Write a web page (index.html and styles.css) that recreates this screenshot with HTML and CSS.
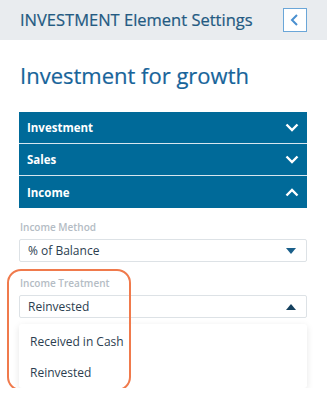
FILE: index.html
```html
<!DOCTYPE html>
<html lang="en">
<head>
  <meta charset="UTF-8" />
  <meta name="viewport" content="width=device-width, initial-scale=1" />
  <title>INVESTMENT Element Settings</title>
  <link rel="stylesheet" href="styles.css">
</head>
<body>
  <div class="header">
    <span class="header-title">INVESTMENT Element Settings</span>
    <button class="back-btn" aria-label="Back">
      <svg width="12" height="14" viewBox="0 0 12 14"><path d="M8 2 L3 7 L8 12" fill="none" stroke="#4a90d0" stroke-width="2" /></svg>
    </button>
  </div>

  <div class="content">
    <h1>Investment for growth</h1>

    <div class="accordion">
      <div class="acc-row">
        <span>Investment</span>
        <svg width="14" height="9" viewBox="0 0 14 9"><path d="M1.5 1.5 L7 7 L12.5 1.5" fill="none" stroke="#fff" stroke-width="2.4" /></svg>
      </div>
      <div class="acc-row">
        <span>Sales</span>
        <svg width="14" height="9" viewBox="0 0 14 9"><path d="M1.5 1.5 L7 7 L12.5 1.5" fill="none" stroke="#fff" stroke-width="2.4" /></svg>
      </div>
      <div class="acc-row">
        <span>Income</span>
        <svg width="14" height="9" viewBox="0 0 14 9"><path d="M1.5 7.5 L7 2 L12.5 7.5" fill="none" stroke="#fff" stroke-width="2.4" /></svg>
      </div>
    </div>

    <div class="field">
      <label>Income Method</label>
      <div class="select">
        <span>% of Balance</span>
        <span class="caret down"></span>
      </div>
    </div>

    <div class="field treatment">
      <label>Income Treatment</label>
      <div class="select">
        <span>Reinvested</span>
        <span class="caret up"></span>
      </div>
      <div class="dropdown">
        <div class="option">Received in Cash</div>
        <div class="option">Reinvested</div>
      </div>
      <div class="highlight"></div>
    </div>
  </div>
</body>
</html>
```

FILE: styles.css
```css
body {
  margin: 0;
  padding: 0;
  font-family: "Open Sans", "Noto Sans", sans-serif;
  background: #fff;
  color: #2c3e50;
}
.header {
  height: 40px;
  background-color: #e9ecef;
  display: flex;
  align-items: center;
  justify-content: space-between;
  padding: 0 20px 0 20px;
  box-sizing: border-box;
}
.header-title {
  font-size: 16.5px;
  color: #235a82;
  margin-top: -2px;
  -webkit-text-stroke: 0.2px #235a82;
}
.back-btn {
  width: 24px;
  height: 24px;
  padding: 0;
  border: 1px solid #6aa6d8;
  background: #fff;
  display: flex;
  align-items: center;
  justify-content: center;
  box-sizing: border-box;
}
.content {
  padding: 0 20px 0 19px;
}
h1 {
  font-size: 22px;
  font-weight: 400;
  color: #17649a;
  margin: 19px 0 0 1px;
  line-height: 32px;
  -webkit-text-stroke: 0.2px #17649a;
}
.accordion {
  margin-top: 21px;
  background: #006a99;
}
.acc-row {
  height: 31px;
  display: flex;
  align-items: center;
  justify-content: space-between;
  padding: 0 8px 0 8px;
  color: #fff;
  font-size: 11.5px;
  font-weight: 700;
  border-bottom: 1px solid #d6e6ef;
}
.acc-row:last-child {
  border-bottom: none;
  height: 32px;
}
.field label {
  display: block;
  font-size: 10px;
  font-weight: 600;
  color: #b4bcc4;
  margin: 13px 0 6px 1px;
  line-height: 12px;
}
.select {
  height: 23px;
  border: 1px solid #dde2e6;
  border-radius: 2px;
  display: flex;
  align-items: center;
  justify-content: space-between;
  padding: 0 10px 0 8px;
  font-size: 12px;
  color: #2c3e50;
  box-sizing: border-box;
}
.caret {
  width: 0;
  height: 0;
  border-left: 5px solid transparent;
  border-right: 5px solid transparent;
}
.caret.down {
  border-top: 6px solid #1a5f8a;
}
.caret.up {
  border-bottom: 6px solid #15405e;
}
.treatment {
  position: relative;
}
.treatment label {
  margin-top: 15px;
}
.dropdown {
  margin-top: 6px;
  background: #fff;
  border-radius: 3px;
  box-shadow: 0 2px 7px rgba(0, 0, 0, 0.1);
  padding: 2px 0 0 0;
}
.option {
  font-size: 12px;
  color: #2c3e50;
  padding: 0 11px;
  line-height: 31px;
}
.highlight {
  position: absolute;
  left: -12px;
  top: -8px;
  width: 124px;
  height: 122px;
  border: 2.5px solid #f07a4c;
  border-radius: 14px;
  box-sizing: border-box;
  pointer-events: none;
}
```
